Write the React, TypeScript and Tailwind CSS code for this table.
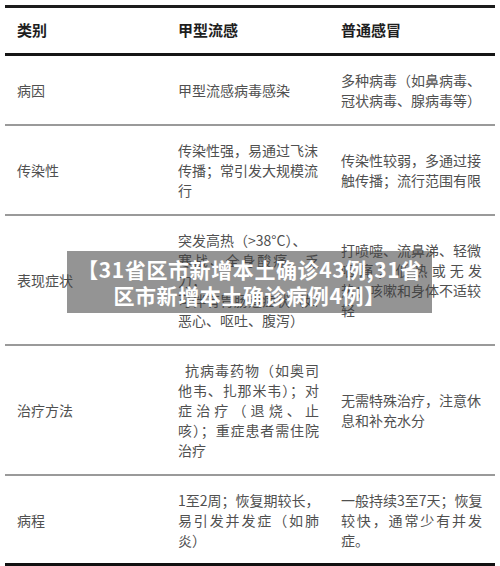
type Line = { t: string; j?: boolean; indent?: boolean };

const rows: { label: string; flu: Line[]; cold: Line[] }[] = [
  {
    label: "病因",
    flu: [{ t: "甲型流感病毒感染" }],
    cold: [{ t: "多种病毒（如鼻病毒、" }, { t: "冠状病毒、腺病毒等）" }],
  },
  {
    label: "传染性",
    flu: [{ t: "传染性强，易通过飞沫" }, { t: "传播；常引发大规模流" }, { t: "行" }],
    cold: [{ t: "传染性较弱，多通过接" }, { t: "触传播；流行范围有限" }],
  },
  {
    label: "表现症状",
    flu: [
      { t: "突发高热（>38°C）、" },
      { t: "寒战、全身酸痛、乏", j: true },
      { t: "力；" },
      { t: "可伴有胃肠道症状（如" },
      { t: "恶心、呕吐、腹泻）" },
    ],
    cold: [
      { t: "打喷嚏、流鼻涕、轻微" },
      { t: "咽痛；低热或无发", j: true },
      { t: "热；咳嗽和身体不适较" },
      { t: "轻" },
    ],
  },
  {
    label: "治疗方法",
    flu: [
      { t: "抗病毒药物（如奥司", j: true, indent: true },
      { t: "他韦、扎那米韦）；对", j: true },
      { t: "症治疗（退烧、止", j: true },
      { t: "咳）；重症患者需住院", j: true },
      { t: "治疗" },
    ],
    cold: [{ t: "无需特殊治疗，注意休" }, { t: "息和补充水分" }],
  },
  {
    label: "病程",
    flu: [
      { t: "1至2周；恢复期较长，" },
      { t: "易引发并发症（如肺", j: true },
      { t: "炎）" },
    ],
    cold: [
      { t: "一般持续3至7天；恢复" },
      { t: "较快，通常少有并发", j: true },
      { t: "症。" },
    ],
  },
];

function Cell({ lines }: { lines: Line[] }) {
  return (
    <div className="w-[141px]">
      {lines.map((l, i) => (
        <div
          key={i}
          className={
            l.j
              ? `text-justify [text-align-last:justify] ${l.indent ? "pl-[7px]" : ""}`
              : "whitespace-nowrap"
          }
        >
          {l.t}
        </div>
      ))}
    </div>
  );
}

export default function App() {
  return (
    <div
      className="relative w-[500px] h-[566px] bg-white overflow-hidden"
      style={{ fontFamily: '"Noto Sans CJK SC", "Noto Sans", sans-serif' }}
    >
      <div className="mx-[5px] mt-[5px] border-t-[3px] border-[#1c1c1c]">
        <div className="grid grid-cols-[161px_163px_1fr] h-[48px] items-center border-b-[3px] border-[#151515] text-[15px] font-bold text-[#1e1e1e]">
          <div className="pl-3">类别</div>
          <div className="pl-3">甲型流感</div>
          <div className="pl-3">普通感冒</div>
        </div>
        {rows.map((r, i) => (
          <div
            key={r.label}
            className={`grid grid-cols-[161px_163px_1fr] items-center py-[14px] text-[14px] leading-[20px] text-[#505050] ${
              i === rows.length - 1
                ? "border-b-[4px] border-[#111] pb-[13px]"
                : "border-b-2 border-[#9a9a9a]"
            }`}
          >
            <div className="pl-3">{r.label}</div>
            <div className="pl-3">
              <Cell lines={r.flu} />
            </div>
            <div className="pl-3">
              <Cell lines={r.cold} />
            </div>
          </div>
        ))}
      </div>

      <div className="absolute left-[67px] top-[251px] w-[365px] h-[62px] bg-[rgba(60,60,60,0.55)] flex flex-col items-center justify-center text-white font-bold text-[21px] leading-[26px] tracking-[0.6px]">
        <div>【31省区市新增本土确诊43例,31省</div>
        <div>区市新增本土确诊病例4例】</div>
      </div>
    </div>
  );
}
